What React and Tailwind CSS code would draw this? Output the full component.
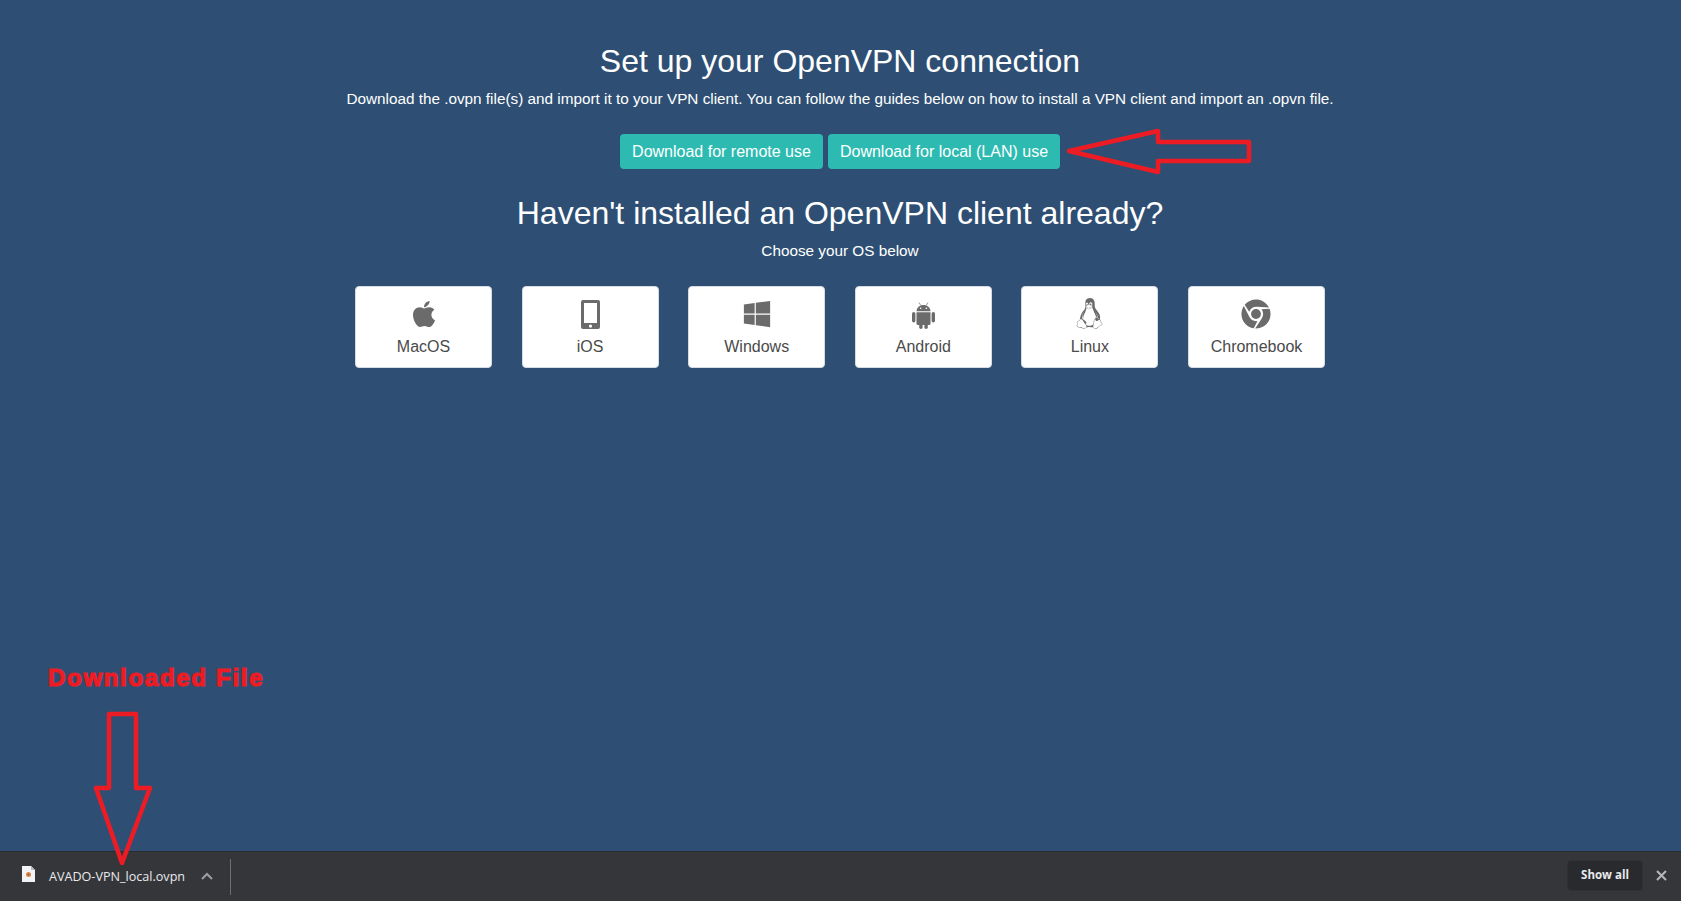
import { FaApple, FaWindows, FaChrome, FaLinux } from "react-icons/fa";

const Phone = () => (
  <svg className="h-[29px] w-[19px]" viewBox="0 0 19 29" fill="#6b6b6b">
    <path fillRule="evenodd" d="M2 0h15a2 2 0 0 1 2 2v25a2 2 0 0 1-2 2H2a2 2 0 0 1-2-2V2a2 2 0 0 1 2-2zm1 3v20h13V3zm6.5 21.5a1.6 1.6 0 1 0 0 3.2 1.6 1.6 0 0 0 0-3.2z" />
  </svg>
);

const Android = () => (
  <svg className="h-[27px] w-[23px]" viewBox="0 0 23 27" fill="#6b6b6b">
    <path d="M4.5 9.2C4.6 5.6 7.600 3 11.500 3s6.900 2.600 7 6.200z" />
    <path d="M7 .5l1.800 3M16 .5l-1.800 3" stroke="#6b6b6b" strokeWidth=".7" />
    <circle cx="8.600" cy="6.200" r=".8" fill="#fff" />
    <circle cx="14.400" cy="6.200" r=".8" fill="#fff" />
    <path d="M4.500 10.200h14v11.300a1.500 1.500 0 0 1-1.500 1.500h-11a1.500 1.500 0 0 1-1.500-1.500z" />
    <rect x="0" y="10" width="3.400" height="10.500" rx="1.700" />
    <rect x="19.600" y="10" width="3.400" height="10.500" rx="1.700" />
    <rect x="7.200" y="21" width="3.400" height="6" rx="1.700" />
    <rect x="12.400" y="21" width="3.400" height="6" rx="1.700" />
  </svg>
);

const systems = [
  { name: "MacOS", icon: <FaApple className="text-[30px] text-[#6b6b6b]" /> },
  { name: "iOS", icon: <Phone /> },
  { name: "Windows", icon: <FaWindows className="text-[30px] text-[#6b6b6b]" /> },
  { name: "Android", icon: <Android /> },
  { name: "Linux", icon: <FaLinux className="text-[31px] text-[#6b6b6b]" /> },
  { name: "Chromebook", icon: <FaChrome className="text-[30px] text-[#6b6b6b]" /> },
];

export default function App() {
  return (
    <div className="relative flex h-screen flex-col overflow-hidden bg-[#2e4f73] font-['Liberation_Sans',Arial,sans-serif] text-white">
      <main className="flex flex-1 flex-col items-center pt-[41px] pr-[1px]">
        <h1 className="text-[32px] leading-[40px]">Set up your OpenVPN connection</h1>
        <p className="mt-[6px] text-[15.3px] leading-6">
          Download the .ovpn file(s) and import it to your VPN client. You can follow the guides below on how to install a VPN client and import an .opvn file.
        </p>
        <div className="mt-[23px] flex gap-[5px]">
          <button className="h-[35px] w-[203px] rounded bg-[#2dbbb1] text-base">Download for remote use</button>
          <button className="h-[35px] w-[232px] rounded bg-[#2dbbb1] text-base">Download for local (LAN) use</button>
        </div>
        <h2 className="mt-[24px] text-[32px] leading-[40px]">Haven't installed an OpenVPN client already?</h2>
        <p className="mt-[6px] text-[15.3px] leading-6">Choose your OS below</p>
        <div className="mt-[23px] flex gap-[29.6px]">
          {systems.map((s) => (
            <div
              key={s.name}
              className="flex h-[82px] w-[137px] flex-col items-center rounded border border-[#d5dbe3] bg-white text-[#4a4a4a]"
            >
              <div className="flex h-[42px] items-end justify-center">{s.icon}</div>
              <span className="mt-[6px] text-base leading-6">{s.name}</span>
            </div>
          ))}
        </div>
      </main>

      <footer className="flex h-[50px] items-center border-t border-[#2b2c2f] bg-[#35363a]">
        <svg className="mb-[5px] ml-[22px] h-[16px] w-[13px]" viewBox="0 0 13 16">
          <path d="M0 0h9l4 4v12H0z" fill="#f1f3f4" />
          <path d="M9 0v4h4z" fill="#b8bcc0" />
          <circle cx="6.500" cy="8.500" r="2.500" fill="#e8833a" />
          <circle cx="6.500" cy="8.500" r="1" fill="#5a6f8a" />
        </svg>
        <span className="mt-[2px] ml-[14px] font-['Open_Sans',sans-serif] text-[12.6px] text-[#e8eaed]">AVADO-VPN_local.ovpn</span>
        <svg className="mb-[2px] ml-[16px] h-[8px] w-[12px]" viewBox="0 0 12 8" fill="none" stroke="#9aa0a6" strokeWidth="2">
          <path d="M1 7l5-5 5 5" />
        </svg>
        <div className="ml-[17px] h-[36px] w-px bg-[#6d6e71]" />
        <button className="mb-[3px] ml-auto h-[31px] w-[76px] rounded border border-[#303134] bg-[#292a2d] font-['Open_Sans',sans-serif] text-[11.5px] font-bold text-[#e8eaed]">
          Show all
        </button>
        <svg className="mr-[14px] mb-[3px] ml-[13px] h-[11px] w-[11px]" viewBox="0 0 11 11" stroke="#b4b6b9" strokeWidth="2">
          <path d="M1 1l9 9M10 1l-9 9" />
        </svg>
      </footer>

      {/* annotations drawn on top of the screenshot */}
      <svg className="pointer-events-none absolute top-0 left-0 h-[901px] w-[1681px]" viewBox="0 0 1681 901" fill="none" stroke="#ed1c24" strokeWidth="4.500" strokeLinejoin="round">
        <path d="M1069 151L1158 131V142H1249V161H1158V172Z" />
        <path d="M109 714H136V788H150L122 863L96 788H109Z" />
      </svg>
      <span className="absolute top-[665px] left-[48px] text-[24px] leading-[26px] font-bold tracking-[1.700px] text-[#ed1c24] [-webkit-text-stroke:1.200px_#ed1c24]">
        Downloaded File
      </span>
    </div>
  );
}
